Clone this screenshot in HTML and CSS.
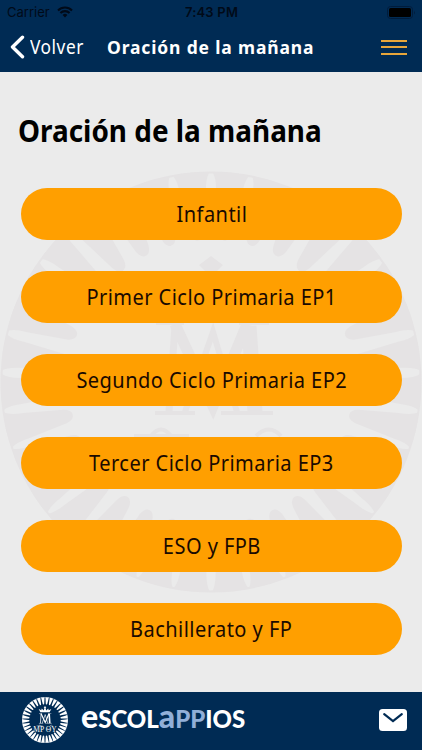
FILE: index.html
```html
<!DOCTYPE html>
<html lang="es">
<head>
    <meta charset="UTF-8">
    <meta name="viewport" content="width=device-width, initial-scale=1.0">
    <title>Escolappios - Oración de la mañana</title>
    <link rel="stylesheet" href="styles.css">
</head>
<body>
    <svg class="defs" width="0" height="0" aria-hidden="true">
        <symbol id="emblem" viewBox="-211 -211 422 422">
            <circle r="209.5" fill="none" stroke="currentColor" stroke-width="2"/>
            <g id="teeth" fill="currentColor"></g>
            <!-- crown -->
            <path d="M0-126l12 9-7 7 7 22 18-17 4 15 24-11-16 31h-84l-16-31 24 11 4-15 18 17 7-22-7-7z" fill="currentColor"/>
            <!-- monogram -->
            <g fill="none" stroke="currentColor">
                <path d="M-36-58L2 24 36-58" stroke-width="11"/>
                <path d="M-36-56L-42 30" stroke-width="7"/>
                <path d="M38-56L44 30" stroke-width="15"/>
                <path d="M-26 30L2-50 26 30" stroke-width="6"/>
                <path d="M-55-59h28M28-59h30M-56 31h40M10 31h52" stroke-width="4"/>
                <path d="M-77 54h55M-60 54q10-13 20 0M45 54q13-13 25 0" stroke-width="4"/>
            </g>
        </symbol>
    </svg>

    <div class="app">
        <header class="header">
            <div class="status-bar">
                <div class="carrier">
                    <span>Carrier</span>
                    <svg width="16" height="12" viewBox="0 0 16 12">
                        <path d="M8 11.5L5.6 9a3.5 3.5 0 0 1 4.8 0z" fill="currentColor"/>
                        <path d="M3.4 7a6.6 6.6 0 0 1 9.2 0M1 4.4a10 10 0 0 1 14 0" fill="none" stroke="currentColor" stroke-width="2.1"/>
                    </svg>
                </div>
                <span class="time">7:43 PM</span>
                <svg class="battery" width="29" height="13" viewBox="0 0 29 13">
                    <rect x=".5" y=".5" width="25" height="12" rx="3" fill="none" stroke="#001c3c"/>
                    <rect x="2" y="2" width="22" height="9" rx="1.5" fill="#000"/>
                    <path d="M27 4.5q1.6 2 0 4z" fill="#001c3c"/>
                </svg>
            </div>
            <nav class="navbar">
                <a class="back">
                    <svg width="15" height="24" viewBox="0 0 15 24">
                        <path d="M12.5 2.2L2.5 12l10 9.8" fill="none" stroke="#fff" stroke-width="3.4" stroke-linecap="round" stroke-linejoin="round"/>
                    </svg>
                    <span>Volver</span>
                </a>
                <span class="nav-title">Oración de la mañana</span>
                <div class="burger"><i></i><i></i><i></i></div>
            </nav>
        </header>

        <main class="content">
            <svg class="watermark"><use href="#emblem"/></svg>
            <h1><span>Oración de la mañana</span></h1>
            <div class="menu">
                <a class="btn"><span>Infantil</span></a>
                <a class="btn"><span>Primer Ciclo Primaria EP1</span></a>
                <a class="btn"><span>Segundo Ciclo Primaria EP2</span></a>
                <a class="btn"><span>Tercer Ciclo Primaria EP3</span></a>
                <a class="btn"><span>ESO y FPB</span></a>
                <a class="btn"><span>Bachillerato y FP</span></a>
            </div>
        </main>

        <footer class="footer">
            <svg class="logo" viewBox="0 0 46 46">
                <use href="#emblem" width="46" height="46"/>
                <text class="logo-text" x="23" y="35" text-anchor="middle">MP ΘY</text>
            </svg>
            <div class="brand"><span class="tall">e</span>SCOL<span class="app-part"><span class="tall">a</span>PP</span>IOS</div>
            <svg class="mail" width="28" height="22" viewBox="0 0 28 22">
                <rect width="28" height="22" rx="3.5" fill="#fff"/>
                <path d="M5.2 5.2l8.8 7 8.8-7" fill="none" stroke="#002b54" stroke-width="2.2" stroke-linecap="round"/>
            </svg>
        </footer>
    </div>

    <script>
        // Rays of the emblem, mirrored left and right
        const teeth = document.getElementById('teeth');
        let rays = '';
        for (let i = 0; i < 17; i++) {
            const angle = i < 9 ? 5.45 + i * 10.91 : 103.3 + (i - 9) * 10.2;
            [angle, -angle].forEach(a => {
                rays += `<path transform="rotate(${a})" d="M-18-208.5Q0-212 18-208.5Q14-203 13-190L7-150Q5-142 0-142Q-5-142-7-150L-13-190Q-14-203-18-208.5z"/>`;
            });
        }
        teeth.innerHTML = rays;
    </script>
</body>
</html>
```

FILE: styles.css
```css
* {
    margin: 0;
    padding: 0;
    box-sizing: border-box;
}

body {
    font-family: 'Noto Sans', sans-serif;
    background: #ebebeb;
    color: #000;
}

.defs {
    position: absolute;
}

.app {
    display: flex;
    flex-direction: column;
    height: 750px;
    overflow: hidden;
}

.header {
    height: 72px;
    background: #002b54;
}

.status-bar {
    display: grid;
    grid-template-columns: 1fr auto 1fr;
    align-items: center;
    height: 24px;
    padding: 0 6px 0 7px;
    font-family: Inter, sans-serif;
    font-size: 13px;
    color: #000a18;
}

.carrier {
    display: flex;
    align-items: center;
    gap: 7px;
}

.time {
    font-weight: 600;
    letter-spacing: 0.2px;
}

.battery {
    justify-self: end;
}

.navbar {
    display: flex;
    align-items: center;
    height: 46px;
    padding: 0 15px 0 10px;
    color: #fff;
}

.back {
    display: flex;
    align-items: center;
    gap: 5px;
    width: 97px;
    font-size: 19px;
    letter-spacing: 0.6px;
}

.back span {
    transform: scaleX(0.91);
    transform-origin: left;
}

.nav-title {
    flex: 1;
    font-size: 18.5px;
    line-height: 24px;
    font-weight: 700;
    letter-spacing: 0.9px;
    white-space: nowrap;
    transform: scaleX(0.945);
    transform-origin: left;
}

.burger {
    display: flex;
    flex-direction: column;
    gap: 4.5px;
    width: 26px;
}

.burger i {
    height: 2px;
    background: #e8a63a;
}

.content {
    position: relative;
    flex: 1;
    padding: 34px 20px 0 21px;
}

.watermark {
    position: absolute;
    top: 99px;
    left: 0;
    width: 422px;
    height: 422px;
    color: #e5e3e4;
}

h1 {
    position: relative;
    height: 82px;
    font-size: 30px;
    line-height: 49px;
    white-space: nowrap;
}

h1 span {
    display: inline-block;
    margin-left: -3px;
    transform: scaleX(0.93);
    transform-origin: left;
}

.menu {
    position: relative;
    display: flex;
    flex-direction: column;
    gap: 31px;
}

.btn {
    display: flex;
    align-items: center;
    justify-content: center;
    height: 52px;
    padding-bottom: 2px;
    border-radius: 26px;
    background: #ff9f00;
    color: #1a0a00;
    font-size: 22px;
    letter-spacing: 0.5px;
    white-space: nowrap;
}

.btn span {
    transform: scaleX(0.91);
}

.footer {
    display: flex;
    align-items: center;
    height: 58px;
    padding: 0 15px 2px 22px;
    background: #002b54;
    color: #fff;
}

.logo {
    width: 46px;
    height: 46px;
}

.logo-text {
    font-family: 'Liberation Serif', serif;
    font-size: 7.5px;
    fill: currentColor;
}

.brand {
    flex: 1;
    margin: -3px 0 0 13px;
    font-family: Lato, sans-serif;
    font-size: 24px;
    font-weight: 900;
    line-height: 40px;
}

.tall {
    font-size: 32px;
    line-height: 20px;
}

.app-part {
    color: #91afd8;
}
```
